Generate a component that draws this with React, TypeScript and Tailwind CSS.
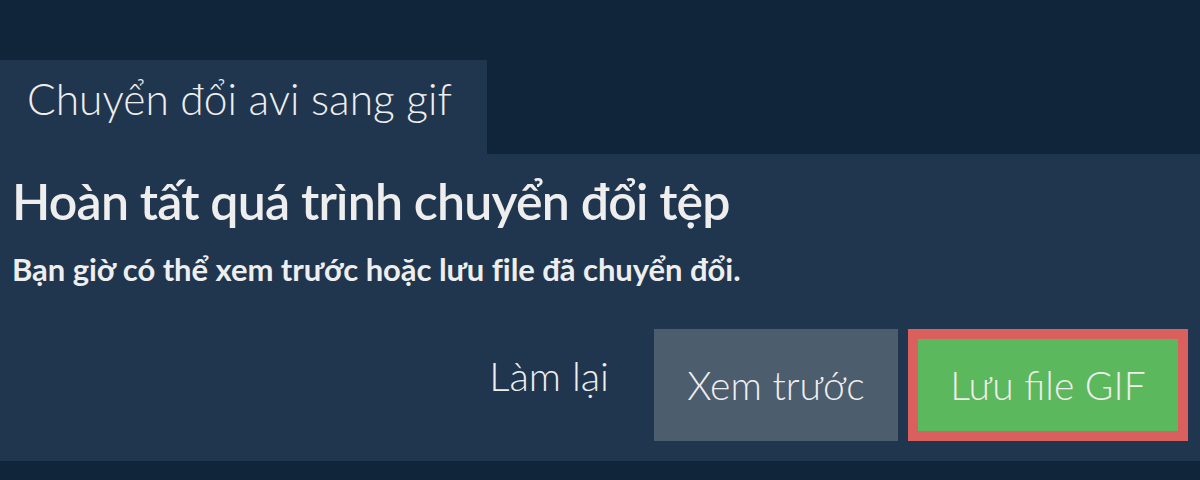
import React from "react";

export default function App() {
  return (
    <div
      className="w-[1200px] h-[480px] bg-[#10243a] pt-[60px] text-[#eeeeee]"
      style={{ fontFamily: "Lato, 'Noto Sans', sans-serif" }}
    >
      <div className="w-[487px] h-[94px] bg-[#20364e] flex items-start pt-[18px] pl-[27px]">
        <span className="text-[42.5px] font-light leading-none">Chuyển đổi avi sang gif</span>
      </div>
      <div className="h-[307px] bg-[#20364e] flex flex-col px-[12px]">
        <h1 className="text-[50px] font-semibold leading-none mt-[22px] tracking-[-0.8px]">
          Hoàn tất quá trình chuyển đổi tệp
        </h1>
        <p className="text-[31px] font-bold leading-none mt-[28px] tracking-[-0.05px]">
          Bạn giờ có thể xem trước hoặc lưu file đã chuyển đổi.
        </p>
        <div className="flex justify-end items-start mt-[44px] gap-[10px]">
          <button className="text-[40px] font-light leading-none mr-[35px] mt-[27px]">
            Làm lại
          </button>
          <button className="w-[244px] h-[112px] bg-[#4c5d6e] text-[39px] font-light leading-none">
            Xem trước
          </button>
          <button className="w-[280px] h-[112px] border-[10px] border-[#d9605c] bg-[#5cb85c] text-[39px] font-light leading-none">
            Lưu file GIF
          </button>
        </div>
      </div>
    </div>
  );
}
